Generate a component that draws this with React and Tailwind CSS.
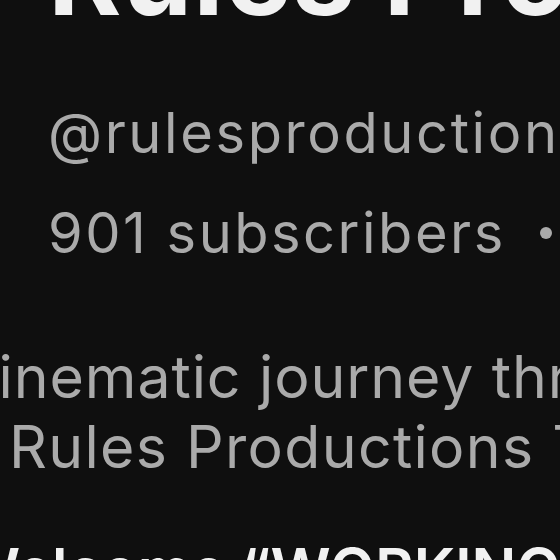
import React from "react";

const App = () => {
  return (
    <div className="w-[560px] h-[560px] overflow-hidden bg-[#0f0f0f] font-['Inter',sans-serif]">
      {/* Channel name */}
      <h1 className="-mt-[82px] pl-[48px] text-[112px] leading-[112px] font-bold text-[#f1f1f1] whitespace-nowrap tracking-[1px]">
        Rules Productions
      </h1>

      {/* Handle + stats */}
      <div className="pl-[48px] text-[#aaaaaa] text-[56px] leading-[64px] whitespace-nowrap">
        <p className="mt-[71px] tracking-[2.6px]">@rulesproductions</p>
        <p className="mt-[36px] flex items-center tracking-[2.5px]">
          <span className="shrink-0">901 subscribers</span>
          <span className="shrink-0 ml-[34px] w-[12px] h-[12px] rounded-full bg-[#aaaaaa]"></span>
          <span className="shrink-0 ml-[20px]">60 videos</span>
        </p>
      </div>

      {/* Description */}
      <div className="mt-[77px] text-[#aaaaaa] text-[59px] leading-[70px] whitespace-nowrap">
        <p className="-ml-[36px] tracking-[0.9px]">cinematic journey through</p>
        <p className="ml-[9px] tracking-[1.3px]">Rules Productions Team</p>
      </div>

      {/* Featured line */}
      <p className="mt-[53px] -ml-[40px] text-[59px] leading-[70px] font-semibold text-[#f1f1f1] whitespace-nowrap">
        Welcome “WORKING”
      </p>
    </div>
  );
};

export default App;
